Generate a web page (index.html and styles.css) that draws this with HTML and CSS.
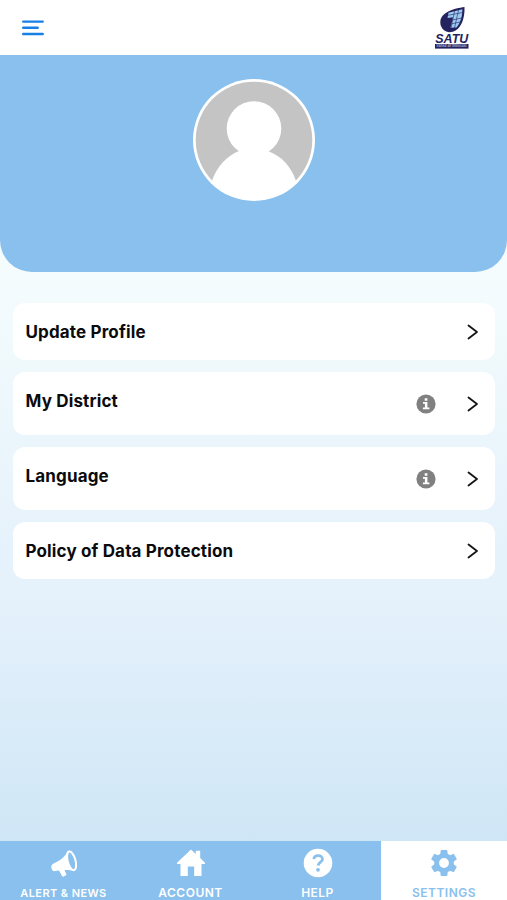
FILE: index.html
```html
<!DOCTYPE html>
<html lang="en">
<head>
<meta charset="utf-8">
<meta name="viewport" content="width=device-width, initial-scale=1">
<title>Settings</title>
<link rel="stylesheet" href="styles.css">
</head>
<body>
<div class="app">
  <header class="topbar">
    <svg class="menu" viewBox="0 0 24 18" aria-label="Menu"><path d="M2.200 2.600h19.500M2.200 8.800h14.500M2.200 15h19.500"/></svg>
    <svg class="logo" viewBox="0 0 36 44" aria-label="SATU">
      <path fill="#25235f" d="M30.500 1C20 2.500 7 6 6.300 15.500C6 21 9.500 25.500 15 26.200C24 26.500 31 17 30.500 1Z"/>
      <path fill="#9ccaf0" d="M14.500 6.800L28.300 3.200C28.500 9 27 16 22.500 21.500L16.500 21.800L19 11.300L13.500 12Z"/>
      <path stroke="#25235f" stroke-width=".6" fill="none" d="M20.700 4.500L17 22M24.700 3.500L20.500 22M14 9.300L29 6.500M18 14L28 12M17 18L26 16"/>
      <text class="logo-name" x="1.300" y="36.800" textLength="33" lengthAdjust="spacingAndGlyphs">SATU</text>
      <rect x="1" y="38" width="33.500" height="4.600" fill="#25235f"/>
      <text class="logo-sub" x="2.500" y="41.400" textLength="30" lengthAdjust="spacingAndGlyphs">SYARIKAT AIR TERENGGANU</text>
    </svg>
  </header>
  <section class="banner">
    <svg class="avatar" viewBox="0 0 122 122" aria-label="Profile picture">
      <defs><clipPath id="disc"><circle cx="61" cy="61" r="60"/></clipPath></defs>
      <circle cx="61" cy="61" r="61" fill="#fff"/>
      <circle cx="61" cy="61" r="58.300" fill="#c4c4c4"/>
      <g fill="#fff" clip-path="url(#disc)"><circle cx="61" cy="49.500" r="27.300"/><path d="M46 72L49.500 71H72.500L76 72.500C88 77 98 87 103 102V122H19V102C24 87 34 77 46 72Z"/></g>
    </svg>
  </section>
  <main class="list">
    <a class="card"><span class="label">Update Profile</span><svg class="chevron" viewBox="0 0 12 16"><path d="M1.500 1.500L10 8l-8.500 6.500"/></svg></a>
    <a class="card tall"><span class="label">My District</span><svg class="info" viewBox="0 0 20 20"><circle cx="10" cy="10" r="9.600"/><path d="M8.700 4.300h2.700v2.400H8.700zM7 8h4.400v5.500h2v1.700H6.900v-1.700h2V9.700H7z"/></svg><svg class="chevron" viewBox="0 0 12 16"><path d="M1.500 1.500L10 8l-8.500 6.500"/></svg></a>
    <a class="card tall"><span class="label">Language</span><svg class="info" viewBox="0 0 20 20"><circle cx="10" cy="10" r="9.600"/><path d="M8.700 4.300h2.700v2.400H8.700zM7 8h4.400v5.500h2v1.700H6.900v-1.700h2V9.700H7z"/></svg><svg class="chevron" viewBox="0 0 12 16"><path d="M1.500 1.500L10 8l-8.500 6.500"/></svg></a>
    <a class="card"><span class="label">Policy of Data Protection</span><svg class="chevron" viewBox="0 0 12 16"><path d="M1.500 1.500L10 8l-8.500 6.500"/></svg></a>
  </main>
  <nav class="tabs">
    <a class="tab alerts"><svg viewBox="0 0 30 30"><path d="M19 2.500C16.500 8 12 12.500 4.500 15.500C2.500 16.500 2 18.500 2.500 20.500C3 22.500 4.500 23.500 6.500 23L10 22.500L13 28C13.500 29 14.500 28.800 15.300 28.300L16.800 27.300C17.700 26.700 17.500 26 16.800 25L15.500 22.200C19 21.800 22 22.200 25.500 23Z"/><ellipse class="bell" cx="22.600" cy="12.800" rx="3.900" ry="9.600" transform="rotate(-15 22.600 12.800)"/></svg><span>ALERT &amp; NEWS</span></a>
    <a class="tab account"><svg viewBox="0 0 30 30"><path d="M15 1.500L19.800 6V2.800h4.400v7.300L29 14.700V16h-3.500v12h-7.300v-9.500h-6.400V28H4.500V16H1v-1.300z"/></svg><span>ACCOUNT</span></a>
    <a class="tab help"><svg viewBox="0 0 30 30"><circle cx="15" cy="15" r="14.300"/><path class="question" d="M10.800 11.200C11.200 6.500 19.500 6.600 19.500 11.200C19.500 14.200 15.300 14.200 15.100 17.700"/><circle class="dot" cx="15" cy="21.800" r="1.900"/></svg><span>HELP</span></a>
    <a class="tab settings"><svg viewBox="1 1 22 22"><path d="M19.140 12.940c.04-.3.060-.61.060-.94s-.02-.64-.07-.94l2.030-1.580a.49.49 0 0 0 .12-.61l-1.920-3.320a.49.49 0 0 0-.59-.22l-2.390.96a7 7 0 0 0-1.620-.94l-.36-2.540A.48.48 0 0 0 13.920 2.400h-3.840a.47.47 0 0 0-.47.410L9.250 5.350a7.300 7.300 0 0 0-1.620.94l-2.390-.96a.48.480 0 0 0-.59.220L2.740 8.870a.47.470 0 0 0 .12.610l2.030 1.580a6 6 0 0 0 0 1.880l-2.030 1.580a.49.490 0 0 0-.12.610l1.920 3.320c.12.220.37.290.59.220l2.390-.96c.5.380 1.030.7 1.620.94l.36 2.540c.05.240.24.410.48.410h3.840c.24 0 .44-.17.470-.41l.36-2.540a7 7 0 0 0 1.620-.94l2.390.96c.22.080.47 0 .59-.22l1.920-3.320a.47.470 0 0 0-.12-.61zM12 15.600a3.600 3.600 0 1 1 0-7.200 3.600 3.600 0 0 1 0 7.200z"/></svg><span>SETTINGS</span></a>
  </nav>
</div>
</body>
</html>
```
FILE: styles.css
```css
* { box-sizing: border-box; }
body { margin: 0; font-family: Inter, "Liberation Sans", sans-serif; }
svg { display: block; flex: none; }
.app {
  height: 900px;
  overflow: hidden;
  display: flex;
  flex-direction: column;
  background: linear-gradient(180deg, #f5fcfe 270px, #eff9fc 365px, #e9f4fc 480px, #e4f1fb 610px, #cfe6f6 840px);
}
.topbar {
  height: 55px;
  flex: none;
  display: flex;
  justify-content: space-between;
  align-items: flex-start;
  padding: 6px 37px 0 21px;
  background: #fff;
}
.menu { width: 24px; height: 18px; margin-top: 13px; fill: none; stroke: #197fe6; stroke-width: 2.4; stroke-linecap: round; }
.logo { width: 36px; height: 44px; }
.logo-name { font: italic 700 12.5px "Liberation Sans", sans-serif; fill: #25235f; }
.logo-sub { font: 700 3px "Liberation Sans", sans-serif; fill: #b8b7d0; }
.banner {
  height: 217px;
  flex: none;
  display: flex;
  justify-content: center;
  padding-top: 24px;
  background: #89c0ed;
  border-radius: 0 0 32px 32px;
}
.avatar { width: 122px; height: 122px; }
.list { flex: 1; display: flex; flex-direction: column; gap: 12px; padding: 31px 12px 0 13px; }
.card {
  height: 57px;
  display: flex;
  align-items: center;
  padding: 0 16px 0 12.5px;
  border-radius: 12px;
  background: #fff;
}
.tall { height: 63px; }
.label { flex: 1; font-size: 17px; font-weight: 650; line-height: 22px; letter-spacing: .15px; color: #0b0b0d; }
.tall .label { margin-bottom: 6px; }
.chevron { width: 12px; height: 16px; fill: none; stroke: #151515; stroke-width: 1.8; stroke-linecap: round; stroke-linejoin: round; }
.info { width: 20px; height: 20px; margin-right: 31px; fill: #808080; }
.info path { fill: #fff; }
.tabs { height: 59px; flex: none; display: grid; grid-template-columns: 127px 127px 127px 1fr; background: #89c0ed; }
.tab { display: flex; flex-direction: column; align-items: center; padding-top: 7px; color: #fff; font-size: 12px; font-weight: 600; line-height: 14px; letter-spacing: .5px; white-space: nowrap; }
.tab svg { width: 30px; height: 30px; fill: currentColor; margin-bottom: 8px; }
.alerts { font-size: 11px; letter-spacing: .4px; }
.alerts .bell { fill: #89c0ed; stroke: #fff; stroke-width: 2; }
.question { fill: none; stroke: #89c0ed; stroke-width: 2.8; }
.dot { fill: #89c0ed; }
.settings { background: #fff; color: #89c0ed; }
```
